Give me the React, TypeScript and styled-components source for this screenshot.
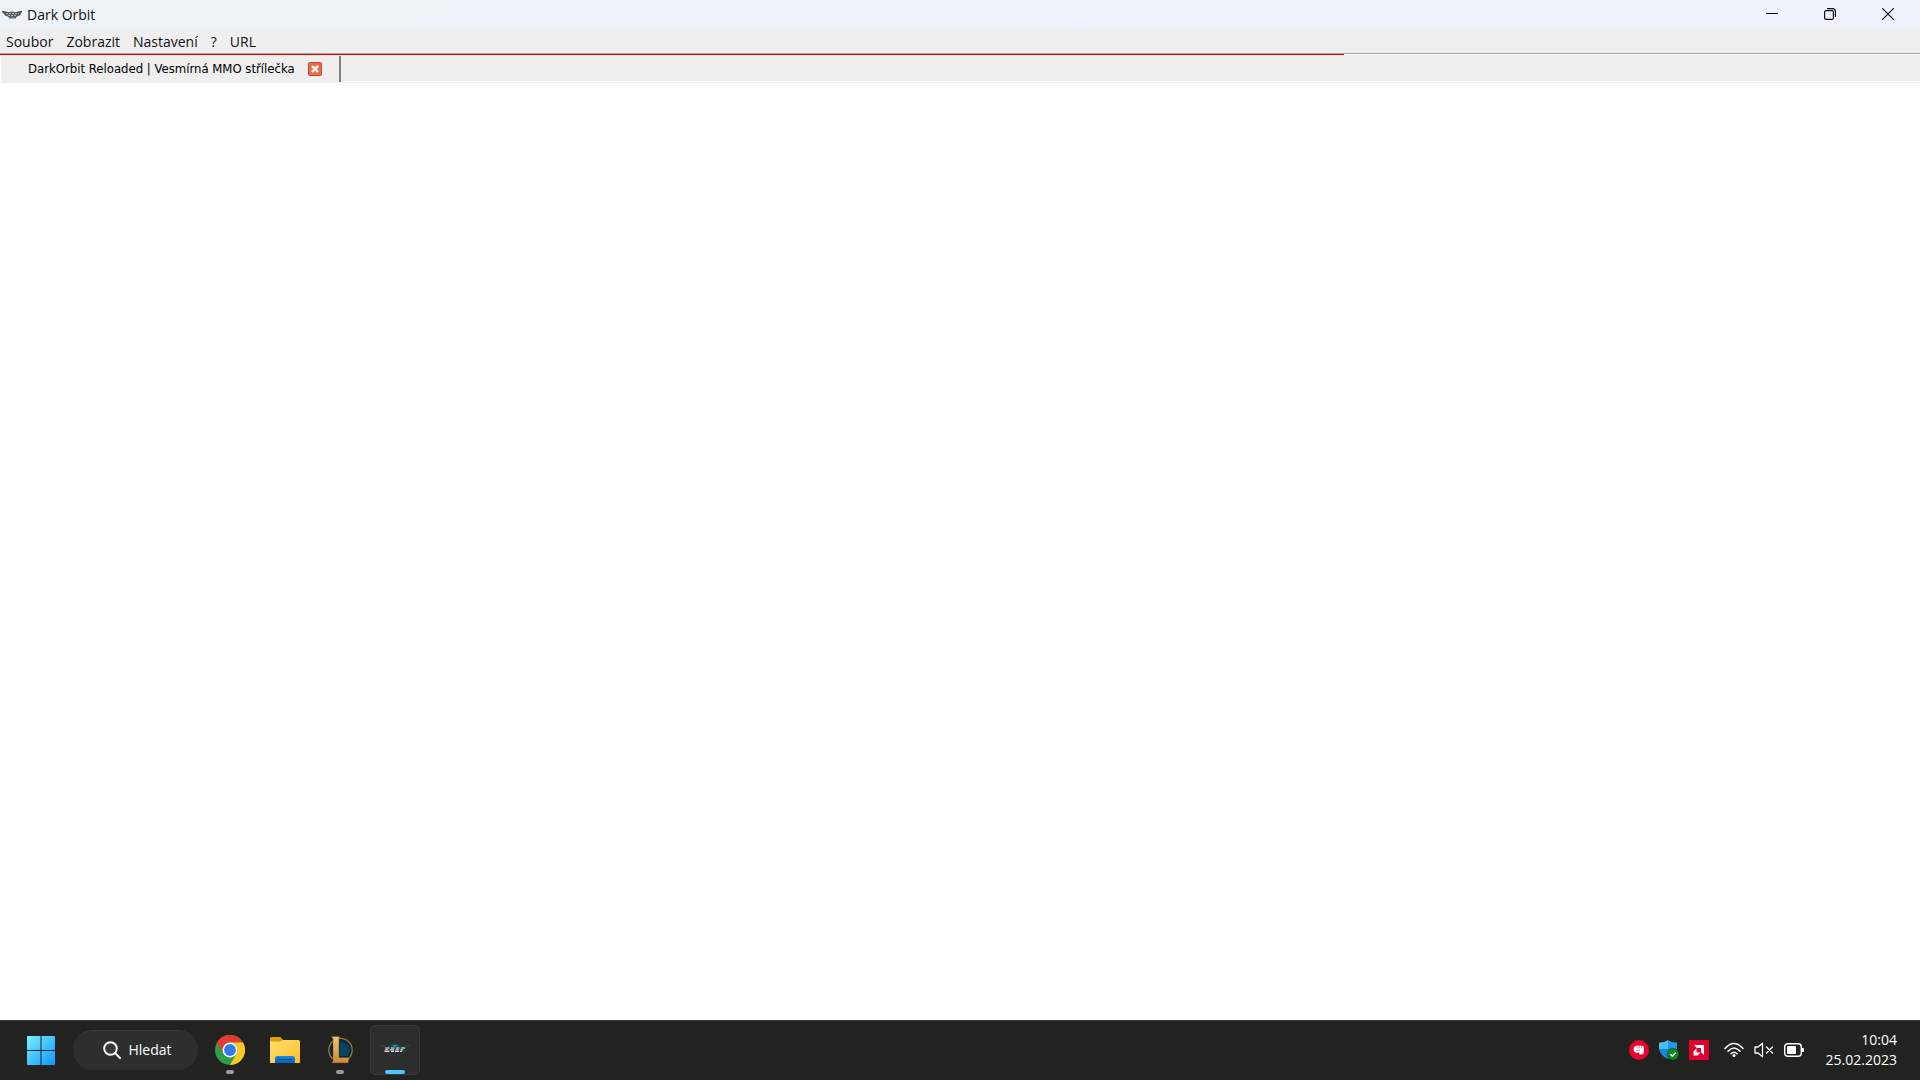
import React from "react";
import styled, { createGlobalStyle } from "styled-components";

const GlobalStyle = createGlobalStyle`
  * { box-sizing: border-box; }
  body {
    margin: 0;
    background: #fff;
    font-family: "Open Sans", "Noto Sans", sans-serif;
  }
  button {
    border: 0;
    margin: 0;
    padding: 0;
    background: none;
    color: inherit;
    font: inherit;
    cursor: default;
  }
  svg { display: block; }
`;

const Screen = styled.div`
  min-height: 100vh;
  display: flex;
  flex-direction: column;
  background: #fff;
`;

const TitleBar = styled.header`
  height: 29px;
  display: flex;
  align-items: center;
  justify-content: space-between;
  padding-left: 2px;
  background: linear-gradient(90deg, #eef3f7, #eef3fb 60%, #eef2fb);
`;

const TitleGroup = styled.div`
  display: flex;
  align-items: center;
  gap: 4px;
`;

const Title = styled.h1`
  margin: 0;
  font-size: 14px;
  line-height: 20px;
  font-weight: 400;
  color: #111;
`;

const WindowControls = styled.div`
  display: flex;
  align-self: stretch;
  padding: 0 3px 2px 0;
`;

const WindowButton = styled.button`
  width: 58px;
  display: grid;
  place-items: center;
`;

const MenuBar = styled.nav`
  height: 24px;
  display: flex;
  align-items: center;
  gap: 13px;
  padding: 2px 0 0 6px;
  background: #efefef;
  color: #111;
  font-size: 14px;
  line-height: 20px;
`;

const LoadTrack = styled.div`
  height: 3px;
  border-top: 1px solid #a0a0a0;
  border-bottom: 1px solid #efefef;
  background: #fff;
`;

const LoadFill = styled.div`
  height: 1px;
  background: #f00;
`;

const TabStrip = styled.div`
  height: 27px;
  display: flex;
  padding-left: 1px;
  border-bottom: 1px solid #efefef;
  background: #fff;
`;

const Tab = styled.div`
  display: flex;
  align-items: center;
  gap: 13px;
  padding: 0 17px 0 27px;
  background: #efefef;
  border-right: 2px solid #808080;
`;

const TabLabel = styled.button`
  font-family: "DejaVu Sans Condensed", "DejaVu Sans", sans-serif;
  font-size: 13px;
  line-height: 18px;
  white-space: nowrap;
  color: #000;
`;

const TabFiller = styled.div`
  flex: 1;
  background: #efefef;
  border-bottom: 1px solid #fff;
`;

const Page = styled.main`
  flex: 1;
  background: #fff;
`;

const Taskbar = styled.footer`
  height: 60px;
  display: flex;
  align-items: center;
  justify-content: space-between;
  padding: 0 23px 2px 16px;
  border-top: 1px solid #3a3d3d;
  background: #222221;
  color: #fff;
`;

const Apps = styled.div`
  display: flex;
  align-items: center;
  gap: 5px;
`;

const SearchButton = styled.button`
  height: 40px;
  width: 125px;
  margin: 0 2px;
  display: flex;
  align-items: center;
  justify-content: center;
  gap: 7px;
  padding-left: 4px;
  border-radius: 20px;
  border-top: 1px solid #393939;
  background: #2e2e2e;
  font-size: 14px;
  line-height: 20px;
`;

const AppButton = styled.button<{ $active?: boolean }>`
  position: relative;
  width: 50px;
  height: 50px;
  display: grid;
  place-items: center;
  border-radius: 5px;
  border: 1px solid ${(p) => (p.$active ? "#393939" : "transparent")};
  background: ${(p) => (p.$active ? "#2d2d2d" : "transparent")};
`;

const RunMark = styled.span<{ $active?: boolean }>`
  position: absolute;
  bottom: 0;
  left: 50%;
  transform: translateX(-50%);
  width: ${(p) => (p.$active ? 20 : 8)}px;
  height: 4px;
  border-radius: 2px;
  background: ${(p) => (p.$active ? "#4cc2ff" : "#9a9a9a")};
`;

const Tray = styled.div`
  display: flex;
  align-items: center;
  gap: 10px;
`;

const StatusButton = styled.button`
  display: flex;
  align-items: center;
  gap: 10px;
  margin: 0 12px 0 5px;
`;

const Clock = styled.button`
  font-size: 14px;
  line-height: 20px;
  text-align: right;
`;

const ClockLine = styled.span`
  display: block;
`;

const ShipBadge = () => (
  <svg width="21" height="10" viewBox="0 0 21 10" aria-hidden="true">
    <path d="M0 1.500L7 2l3-.5 3 .5 7-.5-2 4-3 1-1.500 2h-6L6 6.500l-3-1z" fill="#596166" />
    <path d="M4 3.500h13M6 5.500h9" stroke="#a5b4b8" strokeWidth="1" strokeDasharray="2 1" />
    <path d="M0 1.500l5 1M20 1.500l-5 1" stroke="#333" />
    <path d="M8 7.500h5l-2.500 1z" fill="#55b9cf" />
  </svg>
);

const WindowsLogo = () => (
  <svg width="30" height="30" viewBox="0 0 30 30" aria-hidden="true">
    <defs>
      <linearGradient id="win" x1="0" y1="0" x2="30" y2="30" gradientUnits="userSpaceOnUse">
        <stop offset="0" stopColor="#7df3ff" />
        <stop offset="1" stopColor="#0a94fb" />
      </linearGradient>
    </defs>
    <path
      fill="url(#win)"
      d="M1.500 1H14.500v14H1V1.500zM15.500 1h13l.5.500V15H15.500zM1 16h13.500v14H1.500L1 29.500zM15.500 16H29v13.500l-.5.500h-13z"
    />
  </svg>
);

const ChromeLogo = () => (
  <svg width="30" height="30" viewBox="0 0 30 30" aria-hidden="true">
    <circle cx="15" cy="15" r="15" fill="#2e9e4b" />
    <path d="M2 7.500A15 15 0 0 1 28 7.500H15L8.500 18.750z" fill="#e33b2e" />
    <path d="M28 7.500A15 15 0 0 1 15 30l6.500-11.250A7.500 7.500 0 0 0 15 7.500z" fill="#fdc921" />
    <circle cx="15" cy="15" r="7.500" fill="#fff" />
    <circle cx="15" cy="15" r="5.900" fill="#2f7bea" />
  </svg>
);

const FolderIcon = () => (
  <svg width="30" height="26" viewBox="0 0 30 26" aria-hidden="true">
    <defs>
      <linearGradient id="fold" x1="0" y1="0" x2="1" y2="1">
        <stop offset="0" stopColor="#ffdf72" />
        <stop offset="1" stopColor="#fcbe2a" />
      </linearGradient>
      <linearGradient id="tray" x1="0" y1="0" x2="0" y2="1">
        <stop offset="0" stopColor="#138be0" />
        <stop offset="1" stopColor="#0763b8" />
      </linearGradient>
    </defs>
    <path d="M0 1.500Q0 0 1.500 0h8q1 0 1.800 1L13 3v5H0z" fill="#dfa000" />
    <path d="M0 4.500h10L13 3h15.500Q30 3 30 4.500V26H0z" fill="url(#fold)" />
    <path d="M5 26v-4.500Q5 19 7.500 19h15q2.500 0 2.500 2.500V26z" fill="url(#tray)" />
    <path d="M9 22.500h12.500" stroke="#06458c" strokeWidth="1.200" strokeLinecap="round" />
  </svg>
);

const LeagueIcon = () => (
  <svg width="28" height="28" viewBox="0 0 28 28" aria-hidden="true">
    <defs>
      <linearGradient id="gold" x1="0" y1="0" x2="0" y2="1">
        <stop offset="0" stopColor="#f0c66d" />
        <stop offset="1" stopColor="#c98c36" />
      </linearGradient>
    </defs>
    <circle cx="14.500" cy="14" r="11.700" fill="#082b42" stroke="#a87b35" strokeWidth="1.200" />
    <path d="M14 6a9 9 0 0 1 8 14h-8z" fill="#0b4463" />
    <path d="M5.500 0.500h8l-.5 2v19h10.500l-1.500 5.500H5.500L7 25V3z" fill="url(#gold)" stroke="#59370f" strokeWidth=".4" />
  </svg>
);

const DarkOrbitIcon = () => (
  <svg width="32" height="14" viewBox="0 0 32 14" aria-hidden="true">
    <path d="M1 2l6 2.500M31 2l-6 2.500" stroke="#2a4a56" strokeWidth="1" />
    <path d="M8 4.500l3-3h10l3 3z" fill="#124a5a" />
    <path d="M13 2h6l-3 2z" fill="#2f9bb5" />
    <path d="M5.500 4.500h21l-2 4H5z" fill="#39464b" />
    <path d="M6.500 5h4M12 5h3.500M17 5h3.500M22 5h4" stroke="#eef2f2" strokeWidth="1.200" />
    <path d="M6 6.800h3M11 6.800h4M16.500 6.800h3M21.500 6.800h2.500" stroke="#dce3e4" strokeWidth="1" />
    <path d="M5.500 8.300h5M12 8.300h3M16 8.300h4M21 8.300h2" stroke="#fff" strokeWidth="1" />
    <path d="M11 11.500h2M15 12h2M19 11.500h2" stroke="#1f4453" strokeWidth="1.500" />
  </svg>
);

const SearchIcon = () => (
  <svg width="18" height="18" viewBox="0 0 18 18" aria-hidden="true">
    <circle cx="7.500" cy="7.500" r="6.300" fill="#3a3a3a" stroke="#fff" strokeWidth="1.900" />
    <path d="M12 12l5 5" stroke="#fff" strokeWidth="2" strokeLinecap="round" />
  </svg>
);

const FistIcon = () => (
  <svg width="20" height="20" viewBox="0 0 20 20" aria-hidden="true">
    <circle cx="10" cy="10" r="10" fill="#e8042f" />
    <path d="M5.500 6.500l2.500-1 2 .2 2-.2 2.500.8.500 3-.5 5.200h-1v-2l-1 2H10.500L10 12.500 7.500 13 5 11.500 4.500 9z" fill="#fff" />
    <path d="M8 6v2.500M10.300 6v2.500M12.700 6v2.500M7.500 10.300l3.500.2" stroke="#e8042f" strokeWidth=".5" fill="none" />
  </svg>
);

const ShieldIcon = () => (
  <svg width="20" height="20" viewBox="0 0 20 20" aria-hidden="true">
    <path d="M9 0Q5 3 0 2.500V9h9z" fill="#48bdf3" />
    <path d="M9 0q4 3 9 2.500V9H9z" fill="#2299e6" />
    <path d="M0 9h9v10Q1 15.500 0 9z" fill="#1688dc" />
    <path d="M9 9h9q-1 6.500-9 10z" fill="#0c60b6" />
    <circle cx="14" cy="14.200" r="5.800" fill="#0e8622" stroke="#12401a" strokeWidth=".6" />
    <path d="M11.300 14.300l2 1.900 3.500-3.600" fill="none" stroke="#fff" strokeWidth="1.300" />
  </svg>
);

const AmdIcon = () => (
  <svg width="20" height="20" viewBox="0 0 20 20" aria-hidden="true">
    <path d="M0 0h20v20H0z" fill="#e0002f" />
    <path d="M5 5h10v10l-3-3V8H8zM4.500 11.500L7.500 8.500v4h4l-3 3h-4z" fill="#fff" />
  </svg>
);

const WifiIcon = () => (
  <svg width="20" height="16" viewBox="0 0 20 16" aria-hidden="true" fill="none" stroke="#fff" strokeWidth="1.500" strokeLinecap="round">
    <path d="M1 6.500q9-10 18 0M4 9.200q6-6.600 12 0M7 11.800q3-3.200 6 0" />
    <circle cx="10" cy="13.500" r="1.500" fill="#fff" stroke="none" />
  </svg>
);

const MutedIcon = () => (
  <svg width="20" height="16" viewBox="0 0 20 16" aria-hidden="true" fill="none" stroke="#fff" strokeWidth="1.300" strokeLinejoin="round" strokeLinecap="round">
    <path d="M1 5h3l4.500-3.800v13.600L4 11H1z" />
    <path d="M12.500 5l6 6M18.500 5l-6 6" />
  </svg>
);

const BatteryIcon = () => (
  <svg width="20" height="14" viewBox="0 0 20 14" aria-hidden="true">
    <rect x=".7" y=".7" width="16.600" height="12.600" rx="3" fill="none" stroke="#fff" strokeWidth="1.400" />
    <rect x="3" y="3" width="9" height="8" rx="1" fill="#fff" />
    <path d="M18 5h1q1 0 1 1v2q0 1-1 1h-1z" fill="#fff" />
  </svg>
);

const CloseTabIcon = () => (
  <svg width="14" height="14" viewBox="0 0 14 14" aria-hidden="true">
    <rect x=".5" y=".5" width="13" height="13" rx="1" fill="#e2714f" stroke="#cf4428" />
    <path d="M4 4l6 6M10 4l-6 6" stroke="#fff" strokeWidth="2.400" />
  </svg>
);

const MinimizeIcon = () => (
  <svg width="12" height="12" viewBox="0 0 12 12" aria-hidden="true">
    <path d="M0 5.500h12" stroke="#000" />
  </svg>
);

const RestoreIcon = () => (
  <svg width="12" height="12" viewBox="0 0 12 12" aria-hidden="true" fill="none" stroke="#111" strokeWidth="1.200">
    <rect x=".6" y="2.600" width="8.800" height="8.800" rx="1.500" />
    <path d="M3 .6h5.500q2.900 0 2.900 2.900V9" />
  </svg>
);

const CloseIcon = () => (
  <svg width="12" height="12" viewBox="0 0 12 12" aria-hidden="true">
    <path d="M.3.3l11.400 11.400M11.700.3L.3 11.700" stroke="#111" strokeWidth="1.200" />
  </svg>
);

const menus = ["Soubor", "Zobrazit", "Nastavení", "?", "URL"];

const apps = [
  { name: "Google Chrome", icon: <ChromeLogo />, running: true, active: false },
  { name: "Průzkumník souborů", icon: <FolderIcon />, running: false, active: false },
  { name: "League of Legends", icon: <LeagueIcon />, running: true, active: false },
  { name: "Dark Orbit", icon: <DarkOrbitIcon />, running: true, active: true },
];

export default function App() {
  const loaded = 70;
  return (
    <Screen>
      <GlobalStyle />
      <TitleBar>
        <TitleGroup>
          <ShipBadge />
          <Title>Dark Orbit</Title>
        </TitleGroup>
        <WindowControls>
          <WindowButton aria-label="Minimalizovat"><MinimizeIcon /></WindowButton>
          <WindowButton aria-label="Obnovit"><RestoreIcon /></WindowButton>
          <WindowButton aria-label="Zavřít"><CloseIcon /></WindowButton>
        </WindowControls>
      </TitleBar>
      <MenuBar>
        {menus.map((m) => (
          <button key={m}>{m}</button>
        ))}
      </MenuBar>
      <LoadTrack role="progressbar" aria-valuenow={loaded}>
        <LoadFill style={{ width: `${loaded}%` }} />
      </LoadTrack>
      <TabStrip>
        <Tab>
          <TabLabel>DarkOrbit Reloaded | Vesmírná MMO střílečka</TabLabel>
          <button aria-label="Zavřít kartu"><CloseTabIcon /></button>
        </Tab>
        <TabFiller />
      </TabStrip>
      <Page />
      <Taskbar>
        <Apps>
          <AppButton aria-label="Start"><WindowsLogo /></AppButton>
          <SearchButton><SearchIcon />Hledat</SearchButton>
          {apps.map((a) => (
            <AppButton key={a.name} aria-label={a.name} $active={a.active}>
              {a.icon}
              {a.running && <RunMark $active={a.active} />}
            </AppButton>
          ))}
        </Apps>
        <Tray>
          <FistIcon />
          <ShieldIcon />
          <AmdIcon />
          <StatusButton aria-label="Síť, zvuk, baterie">
            <WifiIcon />
            <MutedIcon />
            <BatteryIcon />
          </StatusButton>
          <Clock>
            <ClockLine>10:04</ClockLine>
            <ClockLine>25.02.2023</ClockLine>
          </Clock>
        </Tray>
      </Taskbar>
    </Screen>
  );
}
